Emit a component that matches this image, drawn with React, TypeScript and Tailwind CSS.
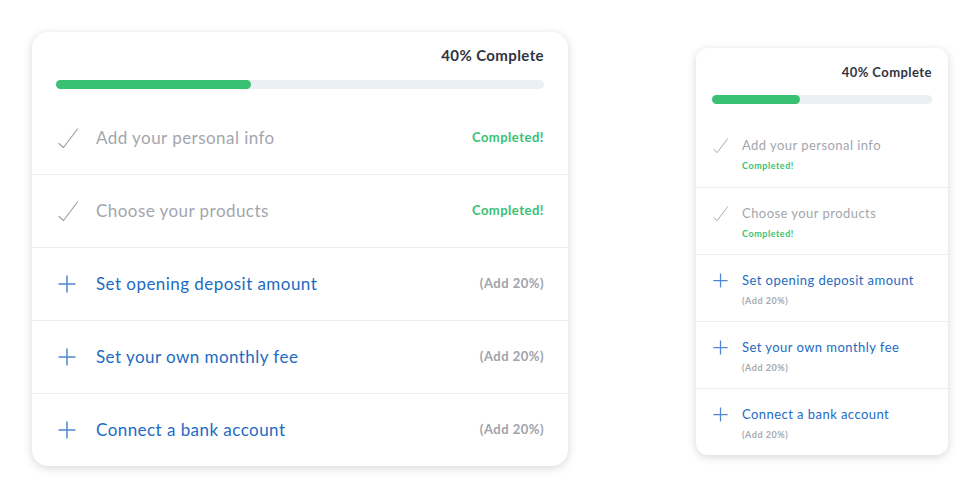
import React from "react";

type Step = { label: string; done: boolean };

const STEPS: Step[] = [
  { label: "Add your personal info", done: true },
  { label: "Choose your products", done: true },
  { label: "Set opening deposit amount", done: false },
  { label: "Set your own monthly fee", done: false },
  { label: "Connect a bank account", done: false },
];

const FONT = { fontFamily: "Lato, 'Open Sans', Arial, sans-serif" };

function CheckIcon({ size }: { size: number }) {
  return (
    <svg width={size} height={size} viewBox="0 0 20 20" fill="none">
      <path d="M1 15.5 L5.5 19.5 L19.5 1" stroke="#9ea1a8" strokeWidth="1.2" strokeLinecap="round" strokeLinejoin="round" />
    </svg>
  );
}

function PlusIcon({ size }: { size: number }) {
  return (
    <svg width={size} height={size} viewBox="0 0 18 18" fill="none">
      <path d="M9 0.5 V17.5 M0.5 9 H17.5" stroke="#4f86d1" strokeWidth="1.5" />
    </svg>
  );
}

function ProgressBar({ pct }: { pct: number }) {
  return (
    <div className="h-[9px] w-full rounded-full bg-[#eaf0f3]">
      <div className="h-full rounded-full bg-[#38c172]" style={{ width: `${pct}%` }} />
    </div>
  );
}

function LargeCard() {
  return (
    <div
      className="w-[536px] rounded-2xl bg-white shadow-[0_2px_10px_rgba(0,0,0,0.16)]"
      style={FONT}
    >
      <div className="px-6 pt-[13px]">
        <div className="text-right text-[15px] leading-5 font-bold tracking-[0.4px] text-[#2f3440]">40% Complete</div>
        <div className="mt-[15px]">
          <ProgressBar pct={40} />
        </div>
      </div>
      <div className="mt-3">
        {STEPS.map((s, i) => (
          <div
            key={s.label}
            className={`flex h-[73px] items-center px-6 ${i > 0 ? "border-t border-[#eeeeee]" : ""}`}
          >
            <div className="ml-[2px] flex w-[38px] items-center">
              {s.done ? <CheckIcon size={20} /> : <PlusIcon size={18} />}
            </div>
            <div
              className={`flex-1 text-[17px] tracking-[0.45px] ${s.done ? "text-[#a3a6ad]" : "text-[#1d6bc2]"}`}
            >
              {s.label}
            </div>
            {s.done ? (
              <div className="text-[13px] font-bold tracking-[0.5px] text-[#38c172]">Completed!</div>
            ) : (
              <div className="text-[13px] font-bold tracking-[0.5px] text-[#a0a3aa]">(Add 20%)</div>
            )}
          </div>
        ))}
      </div>
    </div>
  );
}

function SmallCard() {
  return (
    <div
      className="mt-4 w-[252px] rounded-xl bg-white shadow-[0_2px_10px_rgba(0,0,0,0.16)]"
      style={FONT}
    >
      <div className="px-4 pt-4">
        <div className="text-right text-[13px] leading-4 font-bold tracking-[0.45px] text-[#2f3440]">40% Complete</div>
        <div className="mt-[15px]">
          <ProgressBar pct={40} />
        </div>
      </div>
      <div className="mt-4">
        {STEPS.map((s, i) => (
          <div
            key={s.label}
            className={`flex h-[67px] px-4 pt-[17px] ${i > 0 ? "border-t border-[#eeeeee]" : ""}`}
          >
            <div className="ml-[1px] flex h-4 w-[29px] items-center">
              {s.done ? <CheckIcon size={15} /> : <PlusIcon size={15} />}
            </div>
            <div>
              <div
                className={`text-[13px] leading-4 tracking-[0.45px] ${s.done ? "text-[#a3a6ad]" : "text-[#1d6bc2]"}`}
              >
                {s.label}
              </div>
              {s.done ? (
                <div className="mt-[6px] text-[9px] leading-[13px] font-bold tracking-[0.55px] text-[#38c172]">Completed!</div>
              ) : (
                <div className="mt-[6px] text-[9px] leading-[13px] font-bold tracking-[0.55px] text-[#a6a9b0]">(Add 20%)</div>
              )}
            </div>
          </div>
        ))}
      </div>
    </div>
  );
}

export default function App() {
  return (
    <div className="flex h-[499px] w-[980px] items-start justify-between bg-white px-8 pt-8">
      <LargeCard />
      <SmallCard />
    </div>
  );
}
